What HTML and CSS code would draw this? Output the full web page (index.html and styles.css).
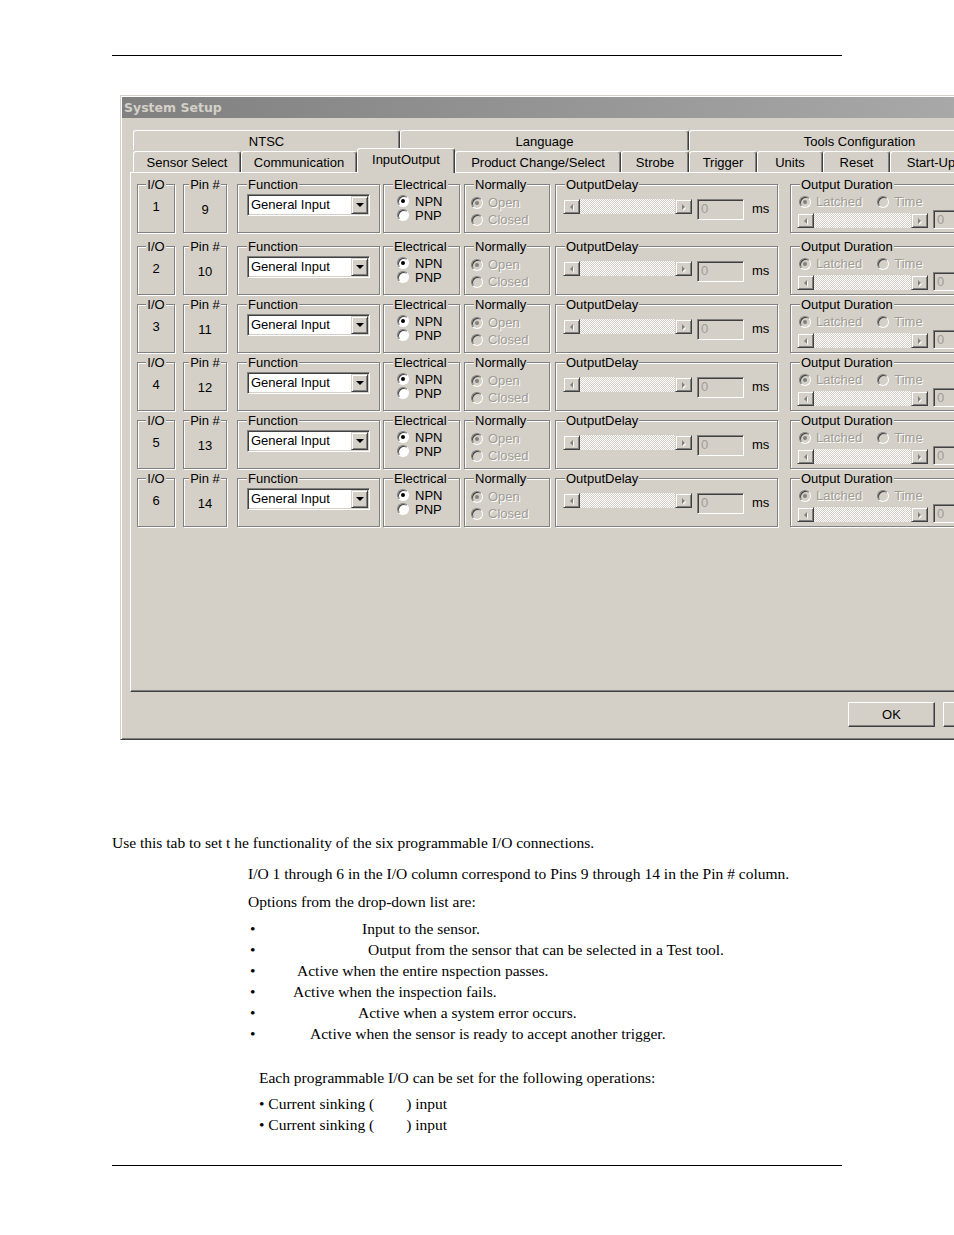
FILE: index.html
```html
<!DOCTYPE html>
<html>
<head>
<meta charset="utf-8">
<title>System Setup - InputOutput</title>
<link rel="stylesheet" href="styles.css">
</head>
<body>
<div class="page">
  <div class="rule top"></div>

  <div class="dialog">
    <div class="titlebar">System Setup</div>

    <div class="tabs">
      <div class="tabrow back">
        <div class="tab t-ntsc">NTSC</div>
        <div class="tab t-lang">Language</div>
        <div class="tab t-tools">Tools Configuration</div>
      </div>
      <div class="tabrow front">
        <div class="tab t-sensor">Sensor Select</div>
        <div class="tab t-comm">Communication</div>
        <div class="tab t-io sel">InputOutput</div>
        <div class="tab t-prod">Product Change/Select</div>
        <div class="tab t-strobe">Strobe</div>
        <div class="tab t-trig">Trigger</div>
        <div class="tab t-units">Units</div>
        <div class="tab t-reset">Reset</div>
        <div class="tab t-start">Start-Up</div>
      </div>
    </div>

    <div class="panel">
      <div class="iorow">
        <div class="grp g-io"><div class="lbl center">I/O</div><div class="val">1</div></div>
        <div class="grp g-pin"><div class="lbl center">Pin #</div><div class="val pinval">9</div></div>
        <div class="grp g-func"><div class="lbl">Function</div><div class="combo"><span class="combo-text">General Input</span><span class="combo-btn"><span class="tri-down"></span></span></div></div>
        <div class="grp g-elec"><div class="lbl">Electrical</div><div class="opt"><span class="radio on"></span>NPN</div><div class="opt"><span class="radio"></span>PNP</div></div>
        <div class="grp g-norm"><div class="lbl">Normally</div><div class="opt dis"><span class="radio on"></span>Open</div><div class="opt dis"><span class="radio"></span>Closed</div></div>
        <div class="grp g-delay"><div class="lbl">OutputDelay</div><div class="delay-line"><div class="sbar"><span class="sb-btn"><span class="tri-l"></span></span><span class="sb-track"></span><span class="sb-btn"><span class="tri-r"></span></span></div><div class="tbox">0</div><span class="ms">ms</span></div></div>
        <div class="grp g-dur"><div class="lbl">Output Duration</div><div class="dur-opts"><span class="opt dis"><span class="radio on"></span>Latched</span><span class="opt dis time"><span class="radio"></span>Time</span></div><div class="dur-line"><div class="sbar wide"><span class="sb-btn"><span class="tri-l"></span></span><span class="sb-track"></span><span class="sb-btn"><span class="tri-r"></span></span></div><div class="tbox">0</div></div></div>
      </div>

      <div class="iorow">
        <div class="grp g-io"><div class="lbl center">I/O</div><div class="val">2</div></div>
        <div class="grp g-pin"><div class="lbl center">Pin #</div><div class="val pinval">10</div></div>
        <div class="grp g-func"><div class="lbl">Function</div><div class="combo"><span class="combo-text">General Input</span><span class="combo-btn"><span class="tri-down"></span></span></div></div>
        <div class="grp g-elec"><div class="lbl">Electrical</div><div class="opt"><span class="radio on"></span>NPN</div><div class="opt"><span class="radio"></span>PNP</div></div>
        <div class="grp g-norm"><div class="lbl">Normally</div><div class="opt dis"><span class="radio on"></span>Open</div><div class="opt dis"><span class="radio"></span>Closed</div></div>
        <div class="grp g-delay"><div class="lbl">OutputDelay</div><div class="delay-line"><div class="sbar"><span class="sb-btn"><span class="tri-l"></span></span><span class="sb-track"></span><span class="sb-btn"><span class="tri-r"></span></span></div><div class="tbox">0</div><span class="ms">ms</span></div></div>
        <div class="grp g-dur"><div class="lbl">Output Duration</div><div class="dur-opts"><span class="opt dis"><span class="radio on"></span>Latched</span><span class="opt dis time"><span class="radio"></span>Time</span></div><div class="dur-line"><div class="sbar wide"><span class="sb-btn"><span class="tri-l"></span></span><span class="sb-track"></span><span class="sb-btn"><span class="tri-r"></span></span></div><div class="tbox">0</div></div></div>
      </div>

      <div class="iorow">
        <div class="grp g-io"><div class="lbl center">I/O</div><div class="val">3</div></div>
        <div class="grp g-pin"><div class="lbl center">Pin #</div><div class="val pinval">11</div></div>
        <div class="grp g-func"><div class="lbl">Function</div><div class="combo"><span class="combo-text">General Input</span><span class="combo-btn"><span class="tri-down"></span></span></div></div>
        <div class="grp g-elec"><div class="lbl">Electrical</div><div class="opt"><span class="radio on"></span>NPN</div><div class="opt"><span class="radio"></span>PNP</div></div>
        <div class="grp g-norm"><div class="lbl">Normally</div><div class="opt dis"><span class="radio on"></span>Open</div><div class="opt dis"><span class="radio"></span>Closed</div></div>
        <div class="grp g-delay"><div class="lbl">OutputDelay</div><div class="delay-line"><div class="sbar"><span class="sb-btn"><span class="tri-l"></span></span><span class="sb-track"></span><span class="sb-btn"><span class="tri-r"></span></span></div><div class="tbox">0</div><span class="ms">ms</span></div></div>
        <div class="grp g-dur"><div class="lbl">Output Duration</div><div class="dur-opts"><span class="opt dis"><span class="radio on"></span>Latched</span><span class="opt dis time"><span class="radio"></span>Time</span></div><div class="dur-line"><div class="sbar wide"><span class="sb-btn"><span class="tri-l"></span></span><span class="sb-track"></span><span class="sb-btn"><span class="tri-r"></span></span></div><div class="tbox">0</div></div></div>
      </div>

      <div class="iorow">
        <div class="grp g-io"><div class="lbl center">I/O</div><div class="val">4</div></div>
        <div class="grp g-pin"><div class="lbl center">Pin #</div><div class="val pinval">12</div></div>
        <div class="grp g-func"><div class="lbl">Function</div><div class="combo"><span class="combo-text">General Input</span><span class="combo-btn"><span class="tri-down"></span></span></div></div>
        <div class="grp g-elec"><div class="lbl">Electrical</div><div class="opt"><span class="radio on"></span>NPN</div><div class="opt"><span class="radio"></span>PNP</div></div>
        <div class="grp g-norm"><div class="lbl">Normally</div><div class="opt dis"><span class="radio on"></span>Open</div><div class="opt dis"><span class="radio"></span>Closed</div></div>
        <div class="grp g-delay"><div class="lbl">OutputDelay</div><div class="delay-line"><div class="sbar"><span class="sb-btn"><span class="tri-l"></span></span><span class="sb-track"></span><span class="sb-btn"><span class="tri-r"></span></span></div><div class="tbox">0</div><span class="ms">ms</span></div></div>
        <div class="grp g-dur"><div class="lbl">Output Duration</div><div class="dur-opts"><span class="opt dis"><span class="radio on"></span>Latched</span><span class="opt dis time"><span class="radio"></span>Time</span></div><div class="dur-line"><div class="sbar wide"><span class="sb-btn"><span class="tri-l"></span></span><span class="sb-track"></span><span class="sb-btn"><span class="tri-r"></span></span></div><div class="tbox">0</div></div></div>
      </div>

      <div class="iorow">
        <div class="grp g-io"><div class="lbl center">I/O</div><div class="val">5</div></div>
        <div class="grp g-pin"><div class="lbl center">Pin #</div><div class="val pinval">13</div></div>
        <div class="grp g-func"><div class="lbl">Function</div><div class="combo"><span class="combo-text">General Input</span><span class="combo-btn"><span class="tri-down"></span></span></div></div>
        <div class="grp g-elec"><div class="lbl">Electrical</div><div class="opt"><span class="radio on"></span>NPN</div><div class="opt"><span class="radio"></span>PNP</div></div>
        <div class="grp g-norm"><div class="lbl">Normally</div><div class="opt dis"><span class="radio on"></span>Open</div><div class="opt dis"><span class="radio"></span>Closed</div></div>
        <div class="grp g-delay"><div class="lbl">OutputDelay</div><div class="delay-line"><div class="sbar"><span class="sb-btn"><span class="tri-l"></span></span><span class="sb-track"></span><span class="sb-btn"><span class="tri-r"></span></span></div><div class="tbox">0</div><span class="ms">ms</span></div></div>
        <div class="grp g-dur"><div class="lbl">Output Duration</div><div class="dur-opts"><span class="opt dis"><span class="radio on"></span>Latched</span><span class="opt dis time"><span class="radio"></span>Time</span></div><div class="dur-line"><div class="sbar wide"><span class="sb-btn"><span class="tri-l"></span></span><span class="sb-track"></span><span class="sb-btn"><span class="tri-r"></span></span></div><div class="tbox">0</div></div></div>
      </div>

      <div class="iorow">
        <div class="grp g-io"><div class="lbl center">I/O</div><div class="val">6</div></div>
        <div class="grp g-pin"><div class="lbl center">Pin #</div><div class="val pinval">14</div></div>
        <div class="grp g-func"><div class="lbl">Function</div><div class="combo"><span class="combo-text">General Input</span><span class="combo-btn"><span class="tri-down"></span></span></div></div>
        <div class="grp g-elec"><div class="lbl">Electrical</div><div class="opt"><span class="radio on"></span>NPN</div><div class="opt"><span class="radio"></span>PNP</div></div>
        <div class="grp g-norm"><div class="lbl">Normally</div><div class="opt dis"><span class="radio on"></span>Open</div><div class="opt dis"><span class="radio"></span>Closed</div></div>
        <div class="grp g-delay"><div class="lbl">OutputDelay</div><div class="delay-line"><div class="sbar"><span class="sb-btn"><span class="tri-l"></span></span><span class="sb-track"></span><span class="sb-btn"><span class="tri-r"></span></span></div><div class="tbox">0</div><span class="ms">ms</span></div></div>
        <div class="grp g-dur"><div class="lbl">Output Duration</div><div class="dur-opts"><span class="opt dis"><span class="radio on"></span>Latched</span><span class="opt dis time"><span class="radio"></span>Time</span></div><div class="dur-line"><div class="sbar wide"><span class="sb-btn"><span class="tri-l"></span></span><span class="sb-track"></span><span class="sb-btn"><span class="tri-r"></span></span></div><div class="tbox">0</div></div></div>
      </div>
    </div>

    <div class="buttons">
      <div class="btn">OK</div>
      <div class="btn">Cancel</div>
    </div>
  </div>

  <div class="doc">
    <p class="p1">Use this tab to set t he functionality of the six programmable I/O connections.</p>
    <p class="p2">I/O 1 through 6 in the I/O column correspond to Pins 9 through 14 in the Pin # column.</p>
    <p class="p3">Options from the drop-down list are:</p>
    <ul class="opts">
      <li><span class="bul b1">•</span>Input to the sensor.</li>
      <li><span class="bul b2">•</span>Output from the sensor that can be selected in a Test tool.</li>
      <li><span class="bul b3">•</span>Active when the entire nspection passes.</li>
      <li><span class="bul b4">•</span>Active when the inspection fails.</li>
      <li><span class="bul b5">•</span>Active when a system error occurs.</li>
      <li><span class="bul b6">•</span>Active when the sensor is ready to accept another trigger.</li>
    </ul>
    <p class="p4">Each programmable I/O can be set for the following operations:</p>
    <div class="ops">
      <div class="op">• Current sinking (<span class="blank"></span>) input</div>
      <div class="op">• Current sinking (<span class="blank"></span>) input</div>
    </div>
  </div>

  <div class="rule bottom"></div>
</div>
</body>
</html>
```

FILE: styles.css
```css
body {
  margin: 0;
  background: #fff;
}

.page {
  width: 954px;
  height: 1235px;
  overflow: hidden;
}

.rule {
  height: 1px;
  width: 730px;
  margin-left: 112px;
  background: #000;
}

.rule.top {
  margin-top: 55px;
}

.rule.bottom {
  margin-top: 30px;
}

/* ---------- dialog ---------- */
.dialog {
  margin-top: 39px;
  margin-left: 120px;
  width: 900px;
  height: 645px;
  box-sizing: border-box;
  padding: 1px;
  background: #d4d0c8;
  border: 1px solid;
  border-color: #d4d0c8 #404040 #404040 #d4d0c8;
  box-shadow: inset 1px 1px #fff, inset -1px -1px #808080;
  font-family: "Liberation Sans", Arial, sans-serif;
  font-size: 13px;
  color: #000;
}

.titlebar {
  height: 21px;
  line-height: 21px;
  padding-left: 2px;
  font-family: "DejaVu Sans", sans-serif;
  font-weight: bold;
  font-size: 12.5px;
  color: #d4d0c8;
  background: linear-gradient(to right, #808080, #c0c0c0 1330px);
}

/* ---------- tabs ---------- */
.tabs {
  margin: 12px 0 0 11px;
}

.tabrow {
  display: flex;
}

.tab {
  flex: none;
  box-sizing: border-box;
  height: 20px;
  line-height: 21px;
  text-align: center;
  white-space: nowrap;
  border-top: 1px solid #fff;
  border-left: 1px solid #fff;
  border-right: 1px solid #404040;
  box-shadow: inset -1px 0 #808080;
  border-radius: 3px 3px 0 0;
  background: #d4d0c8;
}

.front {
  margin-top: 1px;
}

.front .tab {
  height: 21px;
  line-height: 21px;
}

.front .tab.sel {
  height: 25px;
  margin-top: -3px;
  margin-bottom: -1px;
  line-height: 22px;
  position: relative;
  z-index: 1;
}

.t-ntsc { width: 267px; }
.t-lang { width: 289px; }
.t-tools { width: 341px; }
.t-sensor { width: 108px; }
.t-comm { width: 116px; }
.t-io { width: 98px; }
.t-prod { width: 166px; }
.t-strobe { width: 68px; }
.t-trig { width: 68px; }
.t-units { width: 66px; }
.t-reset { width: 67px; }
.t-start { width: 82px; }

/* ---------- panel ---------- */
.panel {
  margin-left: 8px;
  width: 880px;
  height: 520px;
  box-sizing: border-box;
  padding: 5px 0 0 6px;
  border-top: 1px solid #fff;
  border-left: 1px solid #fff;
  border-right: 1px solid #404040;
  border-bottom: 1px solid #404040;
  box-shadow: inset -1px -1px #808080;
}

.iorow {
  display: flex;
  align-items: flex-start;
  height: 55px;
  margin-bottom: 3px;
}

.iorow:first-child {
  margin-bottom: 7px;
}

.grp {
  flex: none;
  box-sizing: border-box;
  margin-top: 6px;
  height: 49px;
  border: 1px solid #808080;
  box-shadow: inset 1px 1px #fff, 1px 1px #fff;
}

.lbl {
  margin: -7px 0 3px 9px;
  width: fit-content;
  height: 13px;
  line-height: 13px;
  padding: 0 1px;
  background: #d4d0c8;
  white-space: nowrap;
}

.lbl.center {
  margin-left: auto;
  margin-right: auto;
}

.g-io { width: 38px; }
.g-pin { width: 44px; margin-left: 8px; }
.g-func { width: 143px; margin-left: 10px; }
.g-elec { width: 77px; margin-left: 3px; }
.g-norm { width: 86px; margin-left: 4px; }
.g-delay { width: 223px; margin-left: 5px; }
.g-dur { width: 200px; margin-left: 12px; }

.val {
  text-align: center;
  line-height: 16px;
  padding-top: 5px;
}

.val.pinval {
  padding-top: 8px;
}

/* combo box */
.combo {
  display: flex;
  box-sizing: border-box;
  width: 123px;
  height: 22px;
  margin: 1px 0 0 9px;
  background: #fff;
  border: 1px solid;
  border-color: #808080 #fff #fff #808080;
  box-shadow: inset 1px 1px #404040, inset -1px -1px #d4d0c8;
  padding: 1px;
}

.combo-text {
  flex: 1;
  line-height: 18px;
  padding-left: 2px;
  white-space: nowrap;
}

.combo-btn {
  flex: none;
  width: 17px;
  height: 18px;
  box-sizing: border-box;
  display: flex;
  align-items: center;
  justify-content: center;
  background: #d4d0c8;
  border: 1px solid;
  border-color: #d4d0c8 #404040 #404040 #d4d0c8;
  box-shadow: inset 1px 1px #fff, inset -1px -1px #808080;
}

.tri-down {
  width: 0;
  height: 0;
  border-left: 4px solid transparent;
  border-right: 4px solid transparent;
  border-top: 4px solid #000;
}

/* radio options */
.opt {
  display: flex;
  align-items: center;
  white-space: nowrap;
}

.g-elec .opt {
  height: 14px;
  padding-left: 13px;
}

.g-norm .opt {
  height: 17px;
  padding-left: 6px;
}

.radio {
  flex: none;
  width: 12px;
  height: 12px;
  box-sizing: border-box;
  border-radius: 50%;
  background: #fff;
  border: 1px solid;
  border-color: #808080 #fff #fff #808080;
  box-shadow: inset 1px 1px #404040;
  display: inline-flex;
  align-items: center;
  justify-content: center;
}

.g-elec .radio {
  margin-right: 6px;
}

.g-norm .radio,
.g-dur .radio {
  margin-right: 5px;
}

.radio.on::after {
  content: "";
  width: 4px;
  height: 4px;
  border-radius: 50%;
  background: #000;
}

.opt.dis {
  color: #a09c94;
  text-shadow: 1px 1px 0 #fff;
}

.opt.dis .radio {
  background: #d4d0c8;
}

.opt.dis .radio.on::after {
  background: #808080;
}

/* scrollbar */
.delay-line {
  display: flex;
  align-items: flex-start;
  margin: 8px 0 0 7px;
}

.sbar {
  flex: none;
  display: flex;
  width: 129px;
  height: 15px;
}

.sbar.wide {
  width: 131px;
}

.sb-btn {
  flex: none;
  width: 17px;
  height: 15px;
  box-sizing: border-box;
  display: flex;
  align-items: center;
  justify-content: center;
  background: #d4d0c8;
  border: 1px solid;
  border-color: #d4d0c8 #404040 #404040 #d4d0c8;
  box-shadow: inset 1px 1px #fff, inset -1px -1px #808080;
}

.sb-track {
  flex: 1;
  background: repeating-conic-gradient(#fff 0 25%, #d4d0c8 0 50%) 0 0 / 2px 2px;
}

.tri-l,
.tri-r {
  width: 0;
  height: 0;
  border-top: 3px solid transparent;
  border-bottom: 3px solid transparent;
  filter: drop-shadow(1px 1px 0 #fff);
}

.tri-l {
  border-right: 3px solid #808080;
}

.tri-r {
  border-left: 3px solid #808080;
}

.tbox {
  flex: none;
  box-sizing: border-box;
  width: 47px;
  height: 21px;
  margin-left: 5px;
  padding-left: 3px;
  line-height: 18px;
  color: #a09c94;
  background: #d4d0c8;
  border: 1px solid;
  border-color: #808080 #fff #fff #808080;
  box-shadow: inset 1px 1px #404040, inset -1px -1px #d4d0c8;
}

.ms {
  margin-left: 8px;
  line-height: 20px;
}

.dur-opts {
  display: flex;
  height: 15px;
  padding-left: 8px;
}

.dur-opts .time {
  margin-left: 15px;
}

.dur-line {
  display: flex;
  align-items: flex-start;
  margin: 1px 0 0 6px;
}

.dur-line .sbar {
  margin-top: 3px;
}

.dur-line .tbox {
  height: 19px;
}

/* buttons */
.buttons {
  display: flex;
  gap: 8px;
  margin-top: 10px;
  padding-left: 726px;
}

.btn {
  flex: none;
  box-sizing: border-box;
  width: 87px;
  height: 25px;
  line-height: 23px;
  text-align: center;
  background: #d4d0c8;
  border: 1px solid;
  border-color: #fff #404040 #404040 #fff;
  box-shadow: inset -1px -1px #808080;
}

/* ---------- document text ---------- */
.doc {
  margin-top: 92px;
  font-family: "Liberation Serif", "Times New Roman", serif;
  font-size: 15.5px;
  line-height: 21px;
  color: #000;
}

.doc p {
  margin: 0;
  white-space: nowrap;
}

.p1 {
  padding-left: 112px;
}

.doc .p2 {
  margin-top: 10px;
  padding-left: 248px;
}

.doc .p3 {
  margin-top: 7px;
  padding-left: 248px;
}

.opts {
  list-style: none;
  margin: 6px 0 0 0;
  padding: 0 0 0 250px;
}

.opts li {
  display: flex;
  white-space: nowrap;
}

.bul {
  flex: none;
}

.b1 { width: 112px; }
.b2 { width: 118px; }
.b3 { width: 47px; }
.b4 { width: 43px; }
.b5 { width: 108px; }
.b6 { width: 60px; }

.doc .p4 {
  margin-top: 23px;
  padding-left: 259px;
}

.ops {
  margin-top: 5px;
  padding-left: 259px;
}

.op {
  white-space: nowrap;
}

.blank {
  display: inline-block;
  width: 32px;
}
```
